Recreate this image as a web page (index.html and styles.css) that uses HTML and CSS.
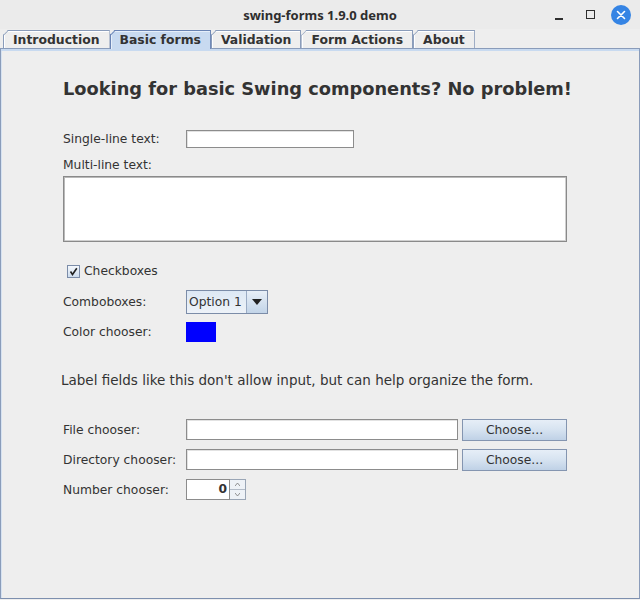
FILE: index.html
```html
<!DOCTYPE html>
<html>
<head>
<meta charset="utf-8">
<link rel="stylesheet" href="styles.css">
</head>
<body>
<div class="titlebar">
  <div></div>
  <div class="title">swing-forms 1.9.0 demo</div>
  <div class="wctl">
    <span class="wmin"></span>
    <span class="wmax"></span>
    <span class="wclose"><svg width="20" height="20" viewBox="0 0 20 20"><path d="M6.5 6.5 L13.5 13.5 M13.5 6.5 L6.5 13.5" stroke="#fff" stroke-width="1.6" stroke-linecap="round"/></svg></span>
  </div>
</div>
<div class="tabs">
  <div class="tab">Introduction</div>
  <div class="tab sel">Basic forms</div>
  <div class="tab">Validation</div>
  <div class="tab">Form Actions</div>
  <div class="tab">About</div>
</div>
<div class="panel">
  <div class="form">
    <h1 class="heading">Looking for basic Swing components? No problem!</h1>
    <div class="row r-single">
      <span class="lbl">Single-line text:</span>
      <span class="field single"></span>
    </div>
    <div class="lbl multi-lbl">Multi-line text:</div>
    <div class="textarea"></div>
    <div class="row r-check">
      <span class="cbox"><svg width="11" height="11" viewBox="0 0 11 11"><path d="M2.5 5.5 L4.5 8.5 L8.8 2.3" stroke="#222" stroke-width="1.6" fill="none"/></svg></span>
      <span class="lbl">Checkboxes</span>
    </div>
    <div class="row r-combo">
      <span class="lbl">Comboboxes:</span>
      <span class="combo"><span class="combo-val">Option 1</span><span class="combo-btn"><svg width="10" height="6" viewBox="0 0 10 6"><path d="M0 0 H10 L5 6 Z" fill="#222"/></svg></span></span>
    </div>
    <div class="row r-color">
      <span class="lbl">Color chooser:</span>
      <span class="swatch"></span>
    </div>
    <div class="note">Label fields like this don't allow input, but can help organize the form.</div>
    <div class="row r-file">
      <span class="lbl">File chooser:</span>
      <span class="field path"></span>
      <span class="btn">Choose...</span>
    </div>
    <div class="row r-dir">
      <span class="lbl">Directory chooser:</span>
      <span class="field path"></span>
      <span class="btn">Choose...</span>
    </div>
    <div class="row r-num">
      <span class="lbl">Number chooser:</span>
      <span class="spinner">
        <span class="spin-val">0</span>
        <span class="spin-btns">
          <span class="spin-b"><svg width="5" height="3" viewBox="0 0 5 3"><path d="M0 3 L2.5 0 L5 3" stroke="#777" stroke-width="0.8" fill="none"/></svg></span>
          <span class="spin-b"><svg width="5" height="3" viewBox="0 0 5 3"><path d="M0 0 L2.5 3 L5 0" stroke="#777" stroke-width="0.8" fill="none"/></svg></span>
        </span>
      </span>
    </div>
  </div>
</div>
</body>
</html>
```
FILE: styles.css
```css
* { box-sizing: border-box; }
html, body { margin: 0; padding: 0; }
body {
  width: 640px;
  height: 600px;
  overflow: hidden;
  background: #eeeeee;
  font-family: "DejaVu Sans", sans-serif;
  color: #333333;
}

/* title bar */
.titlebar {
  height: 29px;
  background: #ebebeb;
  display: grid;
  grid-template-columns: 1fr auto 1fr;
  align-items: center;
}
.title {
  font-family: "Noto Sans", sans-serif;
  font-weight: 700;
  font-size: 13px;
  color: #2e2e2e;
}
.wctl {
  justify-self: end;
  display: flex;
  align-items: center;
  padding-right: 9px;
}
.wmin {
  width: 8px;
  height: 2px;
  background: #2e2e2e;
  margin-top: 9px;
  margin-right: 23px;
}
.wmax {
  width: 9px;
  height: 9px;
  border: 1.5px solid #2e2e2e;
  margin-right: 16px;
}
.wclose {
  width: 20px;
  height: 20px;
  border-radius: 50%;
  background: #3584e4;
  display: flex;
}

/* tabs */
.tabs {
  display: flex;
  align-items: flex-end;
  height: 19px;
  padding-left: 3px;
}
.tab {
  position: relative;
  height: 18px;
  padding: 0 9px;
  border: 1px solid #8a9cba;
  border-bottom: none;
  font-weight: 700;
  font-size: 12.4px;
  line-height: 17px;
  color: #333333;
  background: #eeeeee;
  box-shadow: inset 1px 1px 0 #ffffff;
  clip-path: polygon(5px 0, 100% 0, 100% 100%, 0 100%, 0 5px);
}
.tab::before {
  content: "";
  position: absolute;
  left: -2px;
  top: 1px;
  width: 8px;
  height: 1px;
  background: #8a9cba;
  transform: rotate(-45deg);
}
.tab.sel {
  background: #c8daf0;
  border-color: #6a84b4;
  box-shadow: inset 1px 1px 0 #e6effa;
  height: 19px;
  margin-bottom: -1px;
  z-index: 2;
}
.tab.sel::before { background: #6a84b4; }

/* panel */
.panel {
  height: 551px;
  border: 1px solid #8a9cba;
  border-bottom-color: #7d8fae;
  box-shadow: inset 0 2px 0 #c8daf0, inset 1px 0 0 #d6e2f1;
}
.form {
  display: flex;
  flex-direction: column;
  padding-left: 62px;
  padding-top: 28px;
}
.heading {
  margin: 0;
  font-size: 17.8px;
  font-weight: 700;
  line-height: 24px;
  height: 24px;
  color: #333333;
}
.row {
  display: flex;
  align-items: center;
}
.lbl {
  font-size: 12.3px;
  line-height: 16px;
  color: #333333;
}
.row > .lbl:first-child { width: 123px; flex: none; }

.field {
  background: #ffffff;
  border: 1px solid #8c8c8c;
  box-shadow: inset 1px 1px 0 #e2e2e2;
}
.r-single { margin-top: 29px; height: 18px; }
.field.single { width: 168px; height: 18px; }

.multi-lbl { margin-top: 9px; }
.textarea {
  margin-top: 3px;
  width: 504px;
  height: 66px;
  background: #ffffff;
  border: 1px solid #8a8a8a;
  box-shadow: inset 1px 1px 0 #b9b9b9, inset -1px -1px 0 #d0d0d0;
}

.r-check { margin-top: 21px; height: 16px; padding-left: 4px; }
.cbox {
  width: 13px;
  height: 13px;
  border: 1px solid #7b8ca8;
  background: linear-gradient(#f4f8fc, #cddcee);
  display: flex;
  align-items: center;
  justify-content: center;
  margin-right: 4px;
}
.r-check .lbl { width: auto; }

.r-combo { margin-top: 11px; height: 24px; }
.combo {
  display: flex;
  width: 82px;
  height: 24px;
  border: 1px solid #7b8ca8;
}
.combo-val {
  flex: 1;
  font-size: 12.3px;
  line-height: 22px;
  padding-left: 2px;
  background: linear-gradient(#dde8f4, #edf2f8);
  color: #333333;
}
.combo-btn {
  width: 21px;
  border-left: 1px solid #9aabc4;
  background: linear-gradient(#e8eff7, #c2d4e8);
  display: flex;
  align-items: center;
  justify-content: center;
}

.r-color { margin-top: 8px; height: 20px; }
.swatch { width: 30px; height: 20px; background: #0000ff; }

.note {
  margin-top: 29px;
  margin-left: -2px;
  font-size: 13.5px;
  line-height: 18px;
  color: #333333;
}

.r-file { margin-top: 30px; height: 22px; }
.r-dir { margin-top: 8px; height: 22px; }
.field.path { width: 272px; height: 21px; align-self: flex-start; }
.btn {
  margin-left: 4px;
  width: 105px;
  height: 22px;
  border: 1px solid #8495b0;
  background: linear-gradient(#e6eef7 0%, #d8e4f1 45%, #bfd1e6 100%);
  font-size: 12.3px;
  line-height: 20px;
  text-align: center;
  color: #333333;
}

.r-num { margin-top: 8px; height: 21px; }
.spinner { display: flex; height: 21px; }
.spin-val {
  width: 44px;
  height: 21px;
  background: #ffffff;
  border: 1px solid #8c8c8c;
  font-size: 12.3px;
  font-weight: 700;
  line-height: 19px;
  text-align: right;
  padding-right: 2px;
  color: #333333;
}
.spin-btns {
  display: flex;
  flex-direction: column;
  width: 16px;
  height: 21px;
  border: 1px solid #9aa6b6;
  border-left: none;
}
.spin-b {
  flex: 1;
  display: flex;
  align-items: center;
  justify-content: center;
  background: #eef2f7;
}
.spin-b + .spin-b { border-top: 1px solid #b3bcc8; }
```
